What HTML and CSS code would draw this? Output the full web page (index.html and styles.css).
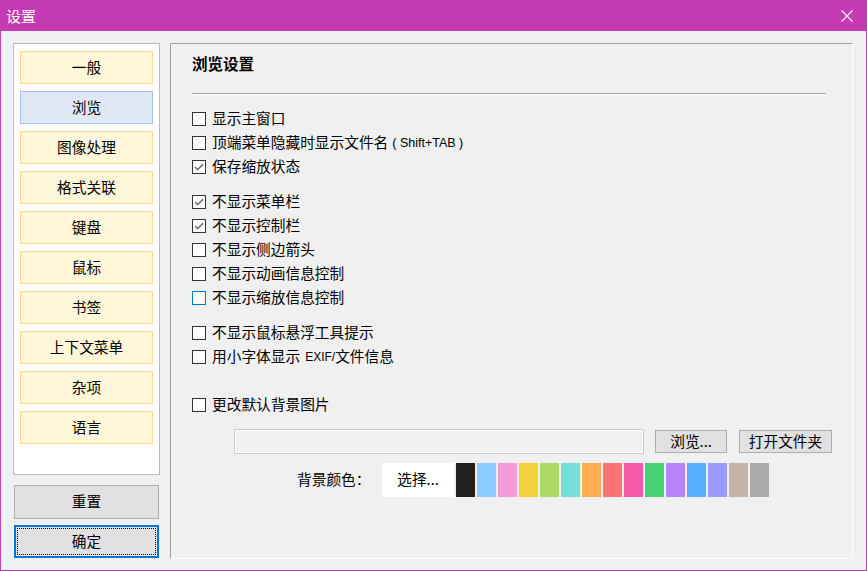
FILE: index.html
```html
<!DOCTYPE html>
<html lang="zh-CN">
<head>
<meta charset="utf-8">
<title>设置</title>
<link rel="stylesheet" href="styles.css">
</head>
<body>
<div class="window">
  <div class="titlebar">
    <span class="title">设置</span>
    <svg class="close" width="12" height="12" viewBox="0 0 12 12"><path d="M0.5 0.5 L11.5 11.5 M11.5 0.5 L0.5 11.5" stroke="#fff" stroke-width="1.1" fill="none"/></svg>
  </div>
  <div class="main">
    <div class="left">
      <div class="list">
        <div class="navbtn">一般</div>
        <div class="navbtn active">浏览</div>
        <div class="navbtn">图像处理</div>
        <div class="navbtn">格式关联</div>
        <div class="navbtn">键盘</div>
        <div class="navbtn">鼠标</div>
        <div class="navbtn">书签</div>
        <div class="navbtn">上下文菜单</div>
        <div class="navbtn">杂项</div>
        <div class="navbtn">语言</div>
      </div>
      <div class="sysbtn reset">重置</div>
      <div class="sysbtn ok">确定</div>
    </div>
    <div class="panel">
      <div class="panel-title">浏览设置</div>
      <div class="sep"></div>

      <div class="group g1">
        <div class="row"><span class="cb"></span><span class="lbl">显示主窗口</span></div>
        <div class="row"><span class="cb"></span><span class="lbl">顶端菜单隐藏时显示文件名</span><span class="latin paren">( Shift+TAB )</span></div>
        <div class="row"><span class="cb checked"><svg width="12" height="12" viewBox="0 0 12 12"><path d="M2 6 L4.6 8.6 L10 3.2" stroke="#5a5a5a" stroke-width="1.3" fill="none"/></svg></span><span class="lbl">保存缩放状态</span></div>
      </div>

      <div class="group g2">
        <div class="row"><span class="cb checked"><svg width="12" height="12" viewBox="0 0 12 12"><path d="M2 6 L4.6 8.6 L10 3.2" stroke="#5a5a5a" stroke-width="1.3" fill="none"/></svg></span><span class="lbl">不显示菜单栏</span></div>
        <div class="row"><span class="cb checked"><svg width="12" height="12" viewBox="0 0 12 12"><path d="M2 6 L4.6 8.6 L10 3.2" stroke="#5a5a5a" stroke-width="1.3" fill="none"/></svg></span><span class="lbl">不显示控制栏</span></div>
        <div class="row"><span class="cb"></span><span class="lbl">不显示侧边箭头</span></div>
        <div class="row"><span class="cb"></span><span class="lbl">不显示动画信息控制</span></div>
        <div class="row"><span class="cb focus"></span><span class="lbl">不显示缩放信息控制</span></div>
      </div>

      <div class="group g3">
        <div class="row"><span class="cb"></span><span class="lbl">不显示鼠标悬浮工具提示</span></div>
        <div class="row"><span class="cb"></span><span class="lbl">用小字体显示</span><span class="latin exif">EXIF/</span><span class="lbl">文件信息</span></div>
      </div>

      <div class="group g4">
        <div class="row"><span class="cb"></span><span class="lbl">更改默认背景图片</span></div>
      </div>

      <div class="filerow">
        <div class="field"></div>
        <div class="btn browse">浏览...</div>
        <div class="btn open">打开文件夹</div>
      </div>

      <div class="colorrow">
        <span class="clabel">背景颜色：</span>
        <div class="select">选择...</div>
        <span class="sw" style="background:#202020"></span>
        <span class="sw" style="background:#8acdff"></span>
        <span class="sw" style="background:#f49bd8"></span>
        <span class="sw" style="background:#f2d23c"></span>
        <span class="sw" style="background:#aed964"></span>
        <span class="sw" style="background:#7adbdb"></span>
        <span class="sw" style="background:#ffae54"></span>
        <span class="sw" style="background:#ff7272"></span>
        <span class="sw" style="background:#f55aaa"></span>
        <span class="sw" style="background:#46d175"></span>
        <span class="sw" style="background:#b784ff"></span>
        <span class="sw" style="background:#58b1ff"></span>
        <span class="sw" style="background:#9a9aff"></span>
        <span class="sw" style="background:#c4b4a8"></span>
        <span class="sw" style="background:#ababab"></span>
      </div>
    </div>
  </div>
</div>
</body>
</html>
```

FILE: styles.css
```css
* { box-sizing: border-box; }
html, body { margin: 0; padding: 0; }
body {
  width: 867px;
  height: 571px;
  overflow: hidden;
  background: #f0f0f0;
  font-family: "Noto Sans CJK SC", "Noto Sans", sans-serif;
  font-size: 14.7px;
  color: #000;
}
.window {
  width: 867px;
  height: 571px;
  border: 1px solid #c43ab2;
  border-top: none;
  display: flex;
  flex-direction: column;
  background: #f0f0f0;
}
.titlebar {
  height: 31px;
  flex: none;
  background: #c43ab2;
  display: flex;
  align-items: center;
  justify-content: space-between;
  padding: 0 13px 0 5px;
  color: #fff;
  font-size: 15px;
  line-height: 20px;
}
.title { margin-top: 1px; }
.close { display: block; }

.main {
  display: flex;
  padding: 12px 0 0 12px;
}
.left {
  width: 147px;
  flex: none;
  display: flex;
  flex-direction: column;
}
.list {
  height: 432px;
  border: 1px solid #bcbcbc;
  background: #fff;
  padding: 7px 6px;
  display: flex;
  flex-direction: column;
  gap: 7px;
}
.navbtn {
  height: 33px;
  flex: none;
  background: #fff7d7;
  border: 1px solid #ffd78c;
  display: flex;
  align-items: center;
  justify-content: center;
  line-height: 20px;
  padding-bottom: 2px;
}
.navbtn.active {
  background: #e0e8f5;
  border-color: #a7bfe8;
}
.sysbtn {
  margin: 0 1px;
  background: #e1e1e1;
  border: 1px solid #adadad;
  display: flex;
  align-items: center;
  justify-content: center;
  line-height: 20px;
  padding-bottom: 2px;
}
.reset { margin-top: 10px; height: 34px; }
.ok {
  margin-top: 6px;
  height: 33px;
  border: 2px solid #0078d7;
  position: relative;
}
.ok::after {
  content: "";
  position: absolute;
  inset: 1px;
  border: 1px dotted #000;
}

.panel {
  margin-left: 10px;
  width: 683px;
  height: 516px;
  flex: none;
  border: 1px solid;
  border-color: #a0a0a0 #ffffff #ffffff #a0a0a0;
  padding: 0 26px 0 21px;
}
.panel-title {
  margin-top: 9px;
  height: 21px;
  line-height: 21px;
  font-weight: bold;
  font-size: 15.5px;
}
.sep {
  margin-top: 19px;
  height: 2px;
  border-top: 1px solid #a0a0a0;
  border-bottom: 1px solid #ffffff;
}
.group { display: flex; flex-direction: column; }
.g1 { margin-top: 12px; }
.g2 { margin-top: 11px; }
.g3 { margin-top: 11px; }
.g4 { margin-top: 24px; }
.row {
  height: 24px;
  display: flex;
  align-items: center;
  line-height: 20px;
  white-space: nowrap;
}
.lbl { padding-bottom: 3px; }
.cb {
  width: 14px;
  height: 14px;
  flex: none;
  border: 1px solid #333;
  background: #fff;
  margin-right: 6px;
  display: flex;
  align-items: center;
  justify-content: center;
}
.cb svg { display: block; }
.cb.focus { border-color: #0078d7; }
.latin {
  font-family: "Liberation Sans", "DejaVu Sans", sans-serif;
  font-size: 12.5px;
  padding-bottom: 1px;
}
.paren { margin-left: 4px; }
.exif { font-size: 12px; margin-left: 5px; padding-bottom: 0; }

.filerow {
  display: flex;
  align-items: center;
  margin: 12px 0 0 42px;
  width: 600px;
}
.field {
  width: 410px;
  height: 25px;
  flex: none;
  border: 1px solid #cbcbcb;
  box-shadow: inset 0 0 0 1px #ffffff;
  background: #f0f0f0;
}
.btn {
  height: 23px;
  flex: none;
  background: #e1e1e1;
  border: 1px solid #adadad;
  display: flex;
  align-items: center;
  justify-content: center;
  line-height: 20px;
  padding-bottom: 2px;
}
.browse { width: 72px; margin-left: 11px; }
.open { width: 93px; margin-left: 12px; }

.colorrow {
  display: flex;
  align-items: center;
  margin: 9px 0 0 105px;
}
.clabel { line-height: 20px; width: 85px; flex: none; padding-bottom: 2px; }
.select {
  width: 72px;
  height: 34px;
  flex: none;
  background: #fff;
  display: flex;
  align-items: center;
  justify-content: center;
  line-height: 20px;
  padding-bottom: 2px;
}
.sw {
  width: 19px;
  height: 34px;
  margin-left: 2px;
  flex: none;
}
```
